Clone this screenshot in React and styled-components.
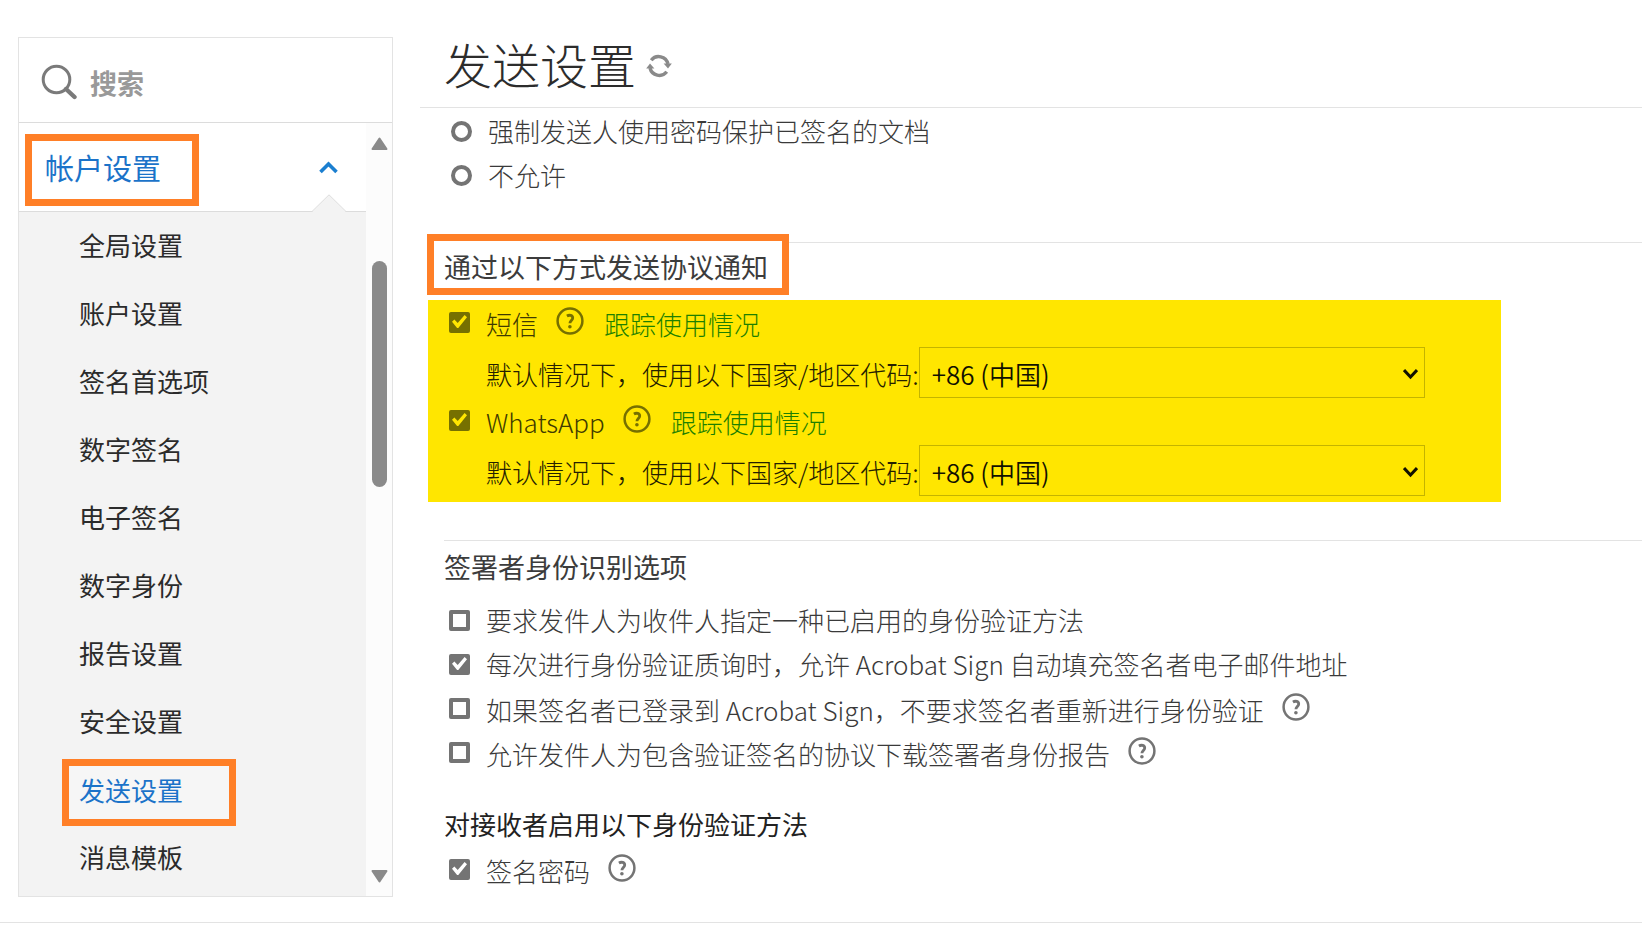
import React from "react";
import styled, { createGlobalStyle, css } from "styled-components";

const GlobalStyle = createGlobalStyle`
  *, *::before, *::after { box-sizing: border-box; }
  body {
    margin: 0;
    background: #fff;
    color: #4b4b4b;
    font-family: "Noto Sans CJK SC", "Noto Sans", sans-serif;
    font-size: 26px;
    line-height: 33px;
  }
  button, input, select { font: inherit; color: inherit; }
  h1, h2, h3, ul { margin: 0; padding: 0; font-weight: 400; }
`;

const orange = "#ff7f27";

const Page = styled.div`
  display: flex;
  align-items: flex-start;
  gap: 27px;
  padding: 0 0 25px 18px;
  border-bottom: 1px solid #e3e3e3;
  overflow: hidden;
`;

/* Sidebar */
const Sidebar = styled.aside`
  flex: 0 0 375px;
  min-width: 0;
  margin-top: 37px;
  border: 1px solid #e3e3e3;
`;

const SearchRow = styled.label`
  display: flex;
  align-items: center;
  gap: 13px;
  height: 85px;
  padding: 4px 0 0 22px;
  border-bottom: 1px solid #dcdcdc;

  svg { flex: none; }
`;

const SearchInput = styled.input`
  flex: 1;
  width: 0;
  min-width: 0;
  border: 0;
  padding: 0;
  outline: 0;
  background: transparent;
  font-size: 27px;
  font-weight: 700;
  &::placeholder { color: #999; opacity: 1; }
`;

const NavArea = styled.div`
  display: flex;
`;

const NavColumn = styled.nav`
  flex: 1;
  min-width: 0;
`;

const GroupButton = styled.button`
  position: relative;
  display: flex;
  align-items: center;
  justify-content: space-between;
  width: 100%;
  height: 89px;
  padding: 0 28px 0 6px;
  border: 0;
  border-bottom: 1px solid #dcdcdc;
  background: #fff;
  color: #1b73c9;
  font-size: 29px;
  text-align: left;
`;

const boxed = css`
  border: 7px solid ${orange};
  background: #fff;
`;

const GroupLabel = styled.span`
  ${boxed}
  width: 174px;
  height: 72px;
  margin-top: 5px;
  padding-left: 13px;
  line-height: 52px;
`;

const Notch = styled.svg`
  position: absolute;
  right: 20px;
  bottom: -1px;
`;

const NavList = styled.ul`
  list-style: none;
  padding-bottom: 4px;
  background: #f3f3f3;
`;

const NavItem = styled.li`
  display: flex;
  align-items: center;
  height: 68px;
  padding-left: ${(p) => (p.$active ? "43px" : "60px")};
`;

const NavLink = styled.a`
  margin-bottom: 4px;
  color: #2b2b2b;
  text-decoration: none;
  ${(p) =>
    p.$active &&
    css`
      ${boxed}
      width: 174px;
      height: 67px;
      margin: 4px 0 0;
      padding-left: 10px;
      line-height: 48px;
      background: #f6f6f6;
      color: #1b73c9;
    `}
`;

const ScrollTrack = styled.div`
  display: flex;
  flex-direction: column;
  align-items: center;
  flex: 0 0 26px;
  padding: 14px 0 13px;
  background: #fcfcfc;
`;

const ScrollThumb = styled.div`
  width: 15px;
  height: 226px;
  margin: 111px 0 auto;
  border-radius: 8px;
  background: #8a8a8a;
`;

/* Main column */
const Main = styled.main`
  flex: 1;
  min-width: 0;
`;

const TitleBar = styled.header`
  display: flex;
  align-items: center;
  gap: 10px;
  padding: 34px 24px 15px;
  border-bottom: 1px solid #e3e3e3;
`;

const Title = styled.h1`
  color: #2c2c2c;
  font-size: 48px;
  font-weight: 300;
  line-height: 58px;
`;

const IconButton = styled.button`
  display: flex;
  flex: none;
  padding: 0;
  border: 0;
  background: none;
  color: var(--control, #747474);
`;

const RefreshButton = styled(IconButton)`
  margin-top: 6px;
`;

const HelpButton = styled(IconButton)`
  margin: 0 20px 2px 18px;
`;

const RadioGroup = styled.div`
  padding: 1px 0 45px 31px;
`;

const Section = styled.section`
  margin-left: 24px;
  border-top: 1px solid #e3e3e3;
`;

const BoxedHeading = styled.h2`
  ${boxed}
  width: max-content;
  margin: -9px 0 5px -17px;
  padding: 9px 14px 5px 10px;
  color: #3c3c3c;
  font-size: 27px;
`;

const Heading = styled.h2`
  padding: 9px 0 15px;
  color: #3c3c3c;
  font-size: 27px;
`;

const SubHeading = styled.h3`
  margin: 33px 0 7px;
  color: #222;
  font-size: 26px;
`;

const Highlight = styled.div`
  --ink: #403a00;
  --control: #767000;
  --surface: #ffe600;
  margin: 0 141px 38px -16px;
  padding: 0 76px 6px 21px;
  background: var(--surface);
`;

const Options = styled.div`
  padding-left: 5px;
`;

const OptionRow = styled.div`
  display: flex;
  align-items: center;
  height: 44px;
`;

const OptionLabel = styled.label`
  display: flex;
  align-items: center;
  gap: 16px;
  color: var(--ink, #3a3a3a);
  font-weight: 300;
  white-space: nowrap;
`;

const OptionText = styled.span`
  padding: ${(p) => (p.$low ? "2px 0 0" : "0 0 2px")};
`;

const Tick = styled.input`
  appearance: none;
  display: grid;
  flex: none;
  width: 21px;
  height: 21px;
  margin: 0;
  border: 4px solid var(--control, #747474);
  border-radius: ${(p) => (p.type === "radio" ? "50%" : "2px")};
  background: var(--surface, #fff);

  &[type="checkbox"]:checked {
    background: var(--control, #747474);
  }
  &[type="checkbox"]:checked::after {
    content: "";
    margin: -1px;
    background: var(--surface, #fff);
    clip-path: polygon(0 48%, 16% 34%, 38% 56%, 84% 4%, 100% 18%, 42% 90%, 34% 90%);
  }
`;

const UsageLink = styled.a`
  padding-top: 2px;
  color: #1d8000;
  font-weight: 300;
  text-decoration: none;
  white-space: nowrap;
`;

const CodeRow = styled.div`
  display: flex;
  align-items: center;
  height: 51px;
  margin-top: 3px;
  padding-left: 37px;
`;

const CodeLabel = styled.label`
  padding-top: 1px;
  color: #242000;
  font-weight: 300;
  white-space: nowrap;
`;

const SelectBox = styled.span`
  position: relative;
  flex: 1;
  min-width: 0;
  height: 51px;

  svg {
    position: absolute;
    right: 7px;
    top: 21px;
    pointer-events: none;
  }
`;

const Select = styled.select`
  appearance: none;
  width: 100%;
  height: 51px;
  padding: 2px 30px 0 12px;
  border: 1px solid #c4b400;
  border-radius: 0;
  background: transparent;
  color: #111000;
  font-weight: 350;
`;

function HelpIcon() {
  return (
    <HelpButton type="button" aria-label="帮助">
      <svg width="28" height="28" viewBox="0 0 28 28" fill="none" stroke="currentColor">
        <circle cx="14" cy="14" r="12.4" strokeWidth="2.5" />
        <path d="M10.9 9c2.6-1.5 5.8-.7 5.8 1.9 0 2.3-2.8 2.8-2.8 5.3" strokeWidth="2.8" />
        <circle cx="13.9" cy="19.8" r="1.8" fill="currentColor" stroke="none" />
      </svg>
    </HelpButton>
  );
}

function Option({ type = "checkbox", name, checked, help, link, children }) {
  return (
    <OptionRow>
      <OptionLabel>
        <Tick type={type} name={name} defaultChecked={checked} />
        <OptionText $low={help}>{children}</OptionText>
      </OptionLabel>
      {help && <HelpIcon />}
      {link && <UsageLink href="#usage">{link}</UsageLink>}
    </OptionRow>
  );
}

function CountryCode({ id }) {
  return (
    <CodeRow>
      <CodeLabel htmlFor={id}>默认情况下，使用以下国家/地区代码:</CodeLabel>
      <SelectBox>
        <Select id={id} defaultValue="86">
          <option value="86">+86 (中国)</option>
        </Select>
        <svg width="15" height="12" viewBox="0 0 15 12" fill="none" stroke="#111000" strokeWidth="3">
          <path d="M1 2l6.5 7L14 2" />
        </svg>
      </SelectBox>
    </CodeRow>
  );
}

const navItems = [
  "全局设置",
  "账户设置",
  "签名首选项",
  "数字签名",
  "电子签名",
  "数字身份",
  "报告设置",
  "安全设置",
  "发送设置",
  "消息模板",
];

export default function App() {
  return (
    <>
      <GlobalStyle />
      <Page>
        <Sidebar>
          <SearchRow>
            <svg width="36" height="36" viewBox="0 0 36 36" fill="none" stroke="#7a7a7a">
              <circle cx="15.5" cy="15.5" r="13.3" strokeWidth="3" />
              <path d="M25 25l8.5 8" strokeWidth="4.4" strokeLinecap="round" />
            </svg>
            <SearchInput type="text" placeholder="搜索" aria-label="搜索" />
          </SearchRow>
          <NavArea>
            <NavColumn>
              <GroupButton type="button" aria-expanded="true">
                <GroupLabel>帐户设置</GroupLabel>
                <svg width="19" height="13" viewBox="0 0 19 13" fill="none" stroke="#1b7fd0" strokeWidth="3.6">
                  <path d="M1.5 11l8-8 8 8" />
                </svg>
                <Notch width="34" height="18" viewBox="0 0 34 18">
                  <path d="M0 18L17 1l17 17z" fill="#f3f3f3" />
                  <path d="M0 17.5L17 .8l17 16.7" fill="none" stroke="#dcdcdc" />
                </Notch>
              </GroupButton>
              <NavList>
                {navItems.map((item) => {
                  const active = item === "发送设置";
                  return (
                    <NavItem key={item} $active={active}>
                      <NavLink href="#settings" $active={active}>
                        {item}
                      </NavLink>
                    </NavItem>
                  );
                })}
              </NavList>
            </NavColumn>
            <ScrollTrack>
              <svg width="17" height="13" viewBox="0 0 17 13" fill="#8a8a8a" stroke="#8a8a8a" strokeWidth="2" strokeLinejoin="round">
                <path d="M8.5 1.5L15.5 12h-14z" />
              </svg>
              <ScrollThumb />
              <svg width="17" height="13" viewBox="0 0 17 13" fill="#8a8a8a" stroke="#8a8a8a" strokeWidth="2" strokeLinejoin="round">
                <path d="M8.5 11.5L15.5 1h-14z" />
              </svg>
            </ScrollTrack>
          </NavArea>
        </Sidebar>

        <Main>
          <TitleBar>
            <Title>发送设置</Title>
            <RefreshButton type="button" aria-label="刷新">
              <svg width="26" height="24" viewBox="0 0 26 24" fill="none" stroke="#8a8a8a" strokeWidth="3.4">
                <path d="M5.2 6.2A9.6 9.6 0 0 1 22 10" />
                <path d="M20.8 17.8A9.6 9.6 0 0 1 4 14" />
                <path d="M17.6 9.6h8.2l-3.8 5z" fill="#8a8a8a" stroke="none" />
                <path d="M8.4 14.4H.2l3.8-5z" fill="#8a8a8a" stroke="none" />
              </svg>
            </RefreshButton>
          </TitleBar>

          <RadioGroup>
            <Option type="radio" name="protect">强制发送人使用密码保护已签名的文档</Option>
            <Option type="radio" name="protect">不允许</Option>
          </RadioGroup>

          <Section>
            <BoxedHeading>通过以下方式发送协议通知</BoxedHeading>
            <Highlight>
              <Option checked help link="跟踪使用情况">短信</Option>
              <CountryCode id="sms-code" />
              <Option checked help link="跟踪使用情况">WhatsApp</Option>
              <CountryCode id="whatsapp-code" />
            </Highlight>
          </Section>

          <Section>
            <Heading>签署者身份识别选项</Heading>
            <Options>
              <Option>要求发件人为收件人指定一种已启用的身份验证方法</Option>
              <Option checked>每次进行身份验证质询时，允许 Acrobat Sign 自动填充签名者电子邮件地址</Option>
              <Option help>如果签名者已登录到 Acrobat Sign，不要求签名者重新进行身份验证</Option>
              <Option help>允许发件人为包含验证签名的协议下载签署者身份报告</Option>
            </Options>
            <SubHeading>对接收者启用以下身份验证方法</SubHeading>
            <Options>
              <Option checked help>签名密码</Option>
            </Options>
          </Section>
        </Main>
      </Page>
    </>
  );
}
